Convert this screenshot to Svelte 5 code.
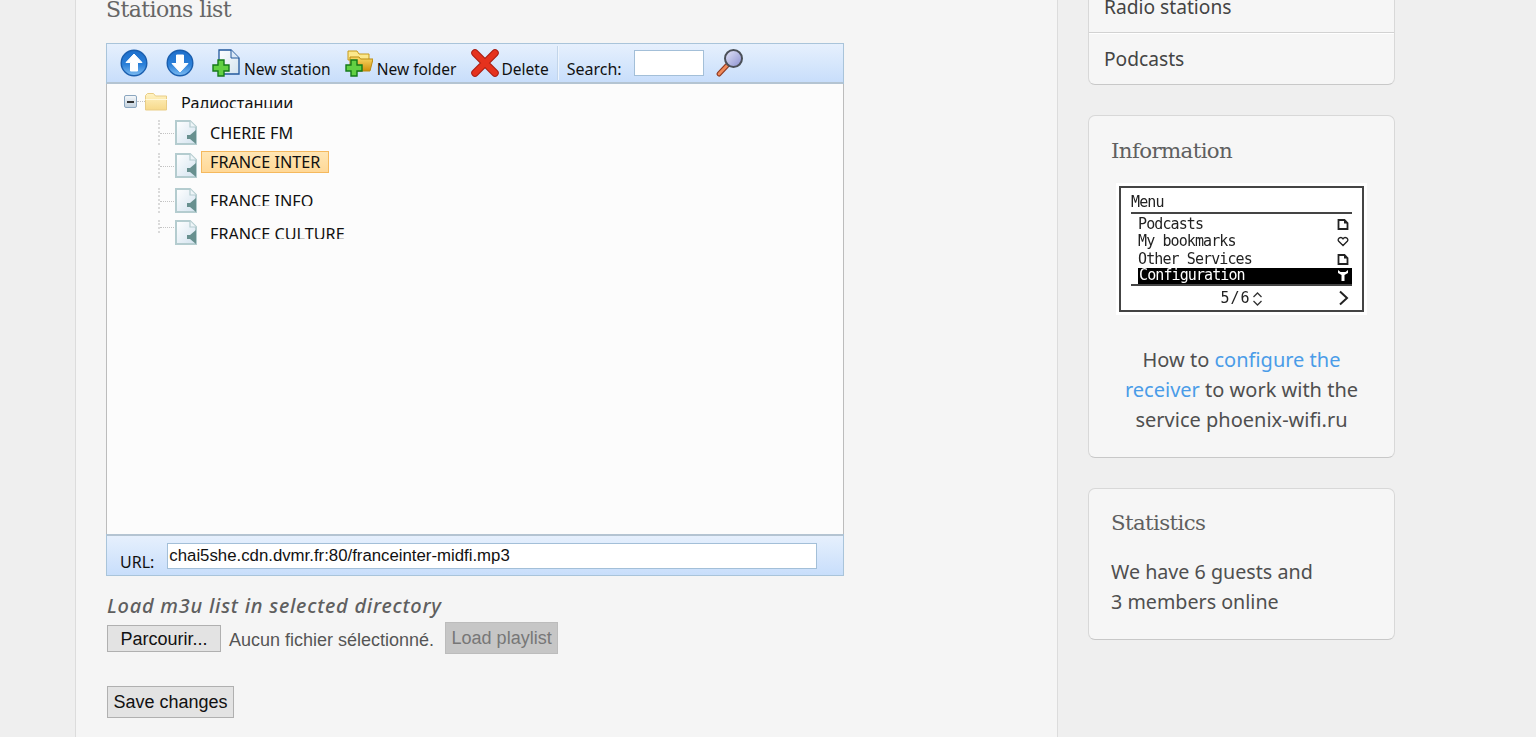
<script lang="ts">
  const stations = [
    { name: 'CHERIE FM', cls: 'r1' },
    { name: 'FRANCE INTER', cls: 'r2', selected: true },
    { name: 'FRANCE INFO', cls: 'r3' },
    { name: 'FRANCE CULTURE', cls: 'r4' }
  ];
  const lcdRows = [
    { label: 'Podcasts', icon: 'doc' },
    { label: 'My bookmarks', icon: 'heart' },
    { label: 'Other Services', icon: 'doc' },
    { label: 'Configuration', icon: 'tool', active: true }
  ];
</script>

<svg class="defs" width="0" height="0" aria-hidden="true">
  <defs>
    <linearGradient id="blueBall" x1="0" y1="0" x2="0" y2="1">
      <stop offset="0" stop-color="#1f6fcb" />
      <stop offset="0.55" stop-color="#2a7fd8" />
      <stop offset="1" stop-color="#7fbdf2" />
    </linearGradient>
    <linearGradient id="paper" x1="0" y1="0" x2="1" y2="1">
      <stop offset="0" stop-color="#ffffff" />
      <stop offset="1" stop-color="#d3e3ef" />
    </linearGradient>
    <linearGradient id="paleFolder" x1="0" y1="0" x2="0" y2="1">
      <stop offset="0" stop-color="#fff3c4" />
      <stop offset="1" stop-color="#f7d98a" />
    </linearGradient>
    <linearGradient id="goldFolder" x1="0" y1="0" x2="0" y2="1">
      <stop offset="0" stop-color="#fbdc68" />
      <stop offset="1" stop-color="#d28f0c" />
    </linearGradient>
    <linearGradient id="lens" x1="0" y1="0" x2="1" y2="1">
      <stop offset="0" stop-color="#e4e6f8" />
      <stop offset="1" stop-color="#8a8fd0" />
    </linearGradient>
  </defs>
</svg>

{#snippet plus(x: number, y: number)}
  <path d="M{x + 5} {y}h6v5h5v6h-5v5h-6v-5h-5v-6h5z" fill="#62d043" stroke="#157a1a" stroke-width="1.400" />
{/snippet}

{#snippet stationIcon()}
  <svg class="st-icon" width="24" height="25" viewBox="0 0 24 25" aria-hidden="true">
    <path d="M2 1h14l6 6v17H2z" fill="url(#paper)" stroke="#b4cccf" stroke-width="2" />
    <path d="M16 1v6h6" fill="#eef5f8" stroke="#b4cccf" stroke-width="1.200" />
    <path d="M13 15h3l6-5v14l-6-5h-3z" fill="#68908f" />
  </svg>
{/snippet}

<div class="page">
  <main class="content">
    <h2 class="title">Stations list</h2>

    <section class="tree-widget">
      <div class="toolbar">
        <button class="tool arrow" type="button" aria-label="Move up">
          <svg width="28" height="28" viewBox="0 0 28 28">
            <circle cx="14" cy="14" r="12.800" fill="url(#blueBall)" stroke="#1a5eae" stroke-width="1.400" />
            <path d="M14 5l8 8.500h-4.500V22h-7v-8.500H6z" fill="#fff" stroke="#fff" stroke-linejoin="round" />
          </svg>
        </button>
        <button class="tool arrow second" type="button" aria-label="Move down">
          <svg width="28" height="28" viewBox="0 0 28 28">
            <circle cx="14" cy="14" r="12.800" fill="url(#blueBall)" stroke="#1a5eae" stroke-width="1.400" />
            <path d="M14 23l-8-8.500h4.500V6h7v8.500H22z" fill="#fff" stroke="#fff" stroke-linejoin="round" />
          </svg>
        </button>
        <button class="tool station" type="button">
          <svg width="28" height="28" viewBox="0 0 28 28" aria-hidden="true">
            <path d="M7 1h12l8 8v16H7z" fill="url(#paper)" stroke="#23589c" stroke-width="1.300" />
            <path d="M19 1v8h8" fill="#dce9f6" stroke="#23589c" stroke-width="1" />
            {@render plus(1, 11)}
          </svg>
          <span>New station</span>
        </button>
        <button class="tool folder" type="button">
          <svg width="28" height="28" viewBox="0 0 28 28" aria-hidden="true">
            <path d="M3 10V2h9l2 3h10v6H3z" fill="#fbe88c" stroke="#c79a1a" />
            <path d="M5 22V8h9l1.500 2H28l-3 12z" fill="url(#goldFolder)" stroke="#b98a12" />
            {@render plus(1, 11)}
          </svg>
          <span>New folder</span>
        </button>
        <button class="tool delete" type="button">
          <svg width="28" height="28" viewBox="0 0 28 28" aria-hidden="true">
            <path d="M4 4l20 20M24 4L4 24" stroke="#a81c10" stroke-width="7.500" stroke-linecap="round" />
            <path d="M4 4l20 20M24 4L4 24" stroke="#e5321d" stroke-width="5.500" stroke-linecap="round" />
          </svg>
          <span>Delete</span>
        </button>
        <span class="sep"></span>
        <label class="search">
          <span>Search:</span>
          <input type="text" />
        </label>
        <button class="tool lens" type="button" aria-label="Search">
          <svg width="30" height="30" viewBox="0 0 30 30">
            <path d="M12 17.500l-8 8.500" stroke="#8f3a22" stroke-width="5" stroke-linecap="round" />
            <path d="M12 17.500l-8 8.500" stroke="#f08a5a" stroke-width="2.600" stroke-linecap="round" />
            <circle cx="18.500" cy="10.500" r="8.500" fill="url(#lens)" stroke="#4b5058" stroke-width="2" />
          </svg>
        </button>
      </div>

      <div class="tree">
        <div class="root-row">
          <span class="expander"><i></i></span>
          <span class="dots-h"></span>
          <svg class="root-folder" width="26" height="20" viewBox="0 0 26 20" aria-hidden="true">
            <path d="M1.500 18V3.500L3.500 1.500h6l2 2.500h11v14z" fill="url(#paleFolder)" stroke="#e9cd86" />
            <path d="M1.500 7.500h21.500" stroke="#fff8dc" />
          </svg>
          <span class="label root-label">Радиостанции</span>
        </div>
        {#each stations as s}
          <div class="row {s.cls}">
            <span class="branch"></span>
            {@render stationIcon()}
            <span class="label" class:selected={s.selected}><span class="clip">{s.name}</span></span>
          </div>
        {/each}
      </div>

      <div class="urlbar">
        <span>URL:</span>
        <input type="text" value="chai5she.cdn.dvmr.fr:80/franceinter-midfi.mp3" />
      </div>
    </section>

    <h3 class="load-title">Load m3u list in selected directory</h3>
    <div class="load-row">
      <button class="btn browse" type="button">Parcourir...</button>
      <span class="no-file">Aucun fichier sélectionné.</span>
      <button class="btn disabled" type="button">Load playlist</button>
    </div>
    <button class="btn save" type="button">Save changes</button>
  </main>

  <aside class="sidebar">
    <nav class="card menu">
      <a href="#radio">Radio stations</a>
      <a href="#podcasts">Podcasts</a>
    </nav>

    <section class="card info">
      <h3>Information</h3>
      <div class="lcd-wrap">
        <div class="lcd">
          <div class="lcd-head">Menu</div>
          {#each lcdRows as r}
            <div class="lcd-row" class:active={r.active}>
              <span>{r.label}</span>
              <svg width="12" height="11" viewBox="0 0 12 11" aria-hidden="true">
                {#if r.icon === 'doc'}
                  <path d="M1.500 1h6l3 3v6h-9z" fill="none" stroke="#222" stroke-width="1.800" />
                  <path d="M7 1l4 3.500H7z" fill="#222" />
                {:else if r.icon === 'heart'}
                  <path d="M6 9.500L1.500 5C0 2.500 4 0 6 2.800 8 0 12 2.500 10.500 5z" fill="none" stroke="#222" stroke-width="1.300" />
                {:else}
                  <path d="M1 0v3l3.500 2v6h3V5L11 3V0L8.500 2h-5z" fill="#fff" />
                {/if}
              </svg>
            </div>
          {/each}
          <div class="lcd-foot">
            <span>5/6</span>
            <svg class="updown" width="11" height="16" viewBox="0 0 11 16" aria-hidden="true">
              <path d="M1.500 6l4-4 4 4M1.500 10l4 4 4-4" fill="none" stroke="#333" stroke-width="1.300" />
            </svg>
            <svg class="chev" width="11" height="16" viewBox="0 0 11 16" aria-hidden="true">
              <path d="M2 1.500L9 8l-7 6.500" fill="none" stroke="#222" stroke-width="2" />
            </svg>
          </div>
        </div>
      </div>
      <p>How to <a href="#conf">configure the receiver</a> to work with the service phoenix-wifi.ru</p>
    </section>

    <section class="card stats">
      <h3>Statistics</h3>
      <p>We have 6 guests and<br />3 members online</p>
    </section>
  </aside>
</div>

<style>
  :global(body) {
    margin: 0;
    background: #efefef;
    overflow: hidden;
  }
  .defs { position: absolute; }

  .page {
    height: 737px;
    overflow: hidden;
    display: flex;
    align-items: flex-start;
    padding-left: 75px;
    font-family: "Noto Sans", sans-serif;
    color: #4a4a4a;
  }

  .content {
    box-sizing: border-box;
    width: 983px;
    height: 760px;
    margin-top: -20px;
    padding: 15px 0 0 31px;
    background: #f5f5f5;
    border-left: 1px solid #dcdcdc;
    border-right: 1px solid #dcdcdc;
  }
  .title {
    margin: 0 0 18px -1px;
    font: 400 22px/30px "DejaVu Serif", serif;
    color: #666;
    letter-spacing: -0.6px;
  }

  .tree-widget {
    box-sizing: border-box;
    width: 738px;
    margin-left: -1px;
    border: 1px solid #a9c4da;
    background: #fcfcfc;
  }
  .toolbar {
    display: flex;
    align-items: center;
    height: 38px;
    padding-left: 13px;
    background: linear-gradient(#e6f0fd, #c8defb);
    border-bottom: 2px solid #b4c4d2;
    font: 15.500px "Noto Sans", sans-serif;
    color: #111;
  }
  .tool {
    display: flex;
    align-items: flex-end;
    gap: 4px;
    padding: 0;
    border: 0;
    background: none;
    font: inherit;
    color: inherit;
    white-space: nowrap;
  }
  .tool span { line-height: 20px; margin-bottom: -2px; }
  .arrow.second { margin-left: 18px; }
  .station { margin-left: 18px; }
  .folder { margin-left: 14px; }
  .delete { margin-left: 14px; gap: 3px; }
  .sep {
    width: 1px;
    height: 34px;
    margin-left: 8px;
    background: #c2d5ea;
    box-shadow: 1px 0 #eef5fd;
  }
  .search {
    display: flex;
    align-items: center;
    gap: 12px;
    margin-left: 9px;
  }
  .search span { margin-top: 12px; font-size: 16px; }
  .search input {
    box-sizing: border-box;
    width: 70px;
    height: 26px;
    border: 1px solid #a3bfd8;
    background: #fff;
    margin-top: -1px;
  }
  .lens { margin-left: 11px; }

  .tree {
    box-sizing: border-box;
    height: 450px;
    margin: 0 -1px;
    padding: 8px 0 0 17px;
    background: #fcfcfc;
    border-left: 1px solid #bcbcbc;
    border-right: 1px solid #bcbcbc;
    font: 16.200px "Noto Sans", sans-serif;
    color: #111;
  }
  .root-row {
    display: flex;
    align-items: center;
    height: 19px;
  }
  .expander {
    box-sizing: border-box;
    display: flex;
    align-items: center;
    justify-content: center;
    width: 13px;
    height: 13px;
    border: 1px solid #8ba6bf;
    border-radius: 2px;
    background: linear-gradient(#f4f7fa, #c4d2de);
  }
  .expander i {
    width: 7px;
    height: 2px;
    background: #333;
  }
  .dots-h {
    width: 8px;
    border-top: 1px dotted #c4c4c4;
  }
  .root-folder { margin-left: -1px; }
  .root-label {
    height: 13px;
    line-height: 16px;
    margin-top: -1px;
    overflow: hidden;
    margin-left: 11px;
  }

  .row {
    position: relative;
    display: flex;
    align-items: center;
    margin-left: 34px;
    padding-left: 16px;
    height: 25px;
  }
  .r1 { margin-top: 9px; }
  .r2 { margin-top: 8px; }
  .r3 { margin-top: 10px; }
  .r4 { margin-top: 7px; }
  .branch {
    position: absolute;
    left: 0;
    top: 0;
    bottom: 0;
    width: 14px;
    border-left: 2px dotted #dadada;
  }
  .branch::after {
    content: '';
    position: absolute;
    top: 50%;
    left: 0;
    width: 14px;
    border-top: 1px dotted #c4c4c4;
  }
  .r4 .branch { bottom: 12px; }
  .st-icon { flex: none; }
  .row .label {
    margin-left: 12px;
  }
  .clip { display: block; line-height: 20px; }
  .row .label.selected {
    margin-left: 3px;
    margin-top: -7px;
    padding: 0 8px;
    border: 1px solid #f5b95e;
    background: linear-gradient(#ffe6b4, #ffd897);
  }
  .r3 .label { margin-top: -4px; }
  .r4 .label { margin-top: -2px; }
  .r3 .clip, .r4 .clip {
    height: 15px;
    overflow: hidden;
  }

  .urlbar {
    display: flex;
    align-items: center;
    gap: 13px;
    height: 39px;
    padding-left: 13px;
    border-top: 2px solid #b4c4d2;
    background: linear-gradient(#e6f0fd, #c8defb);
    font: 16px "Noto Sans", sans-serif;
    color: #111;
  }
  .urlbar span { margin-top: 13px; }
  .urlbar input {
    box-sizing: border-box;
    width: 650px;
    height: 26px;
    padding: 0 1px;
    margin-top: 0;
    border: 1px solid #a3bfd8;
    background: #fff;
    font: 16.800px "Liberation Sans", sans-serif;
    color: #111;
  }

  .load-title {
    margin: 17px 0 0;
    font: italic 500 20px/26px "Noto Sans", sans-serif;
    letter-spacing: 0.75px;
    color: #5f5f5f;
  }
  .load-row {
    display: flex;
    align-items: flex-start;
    margin-top: 3px;
    font: 18px "Liberation Sans", sans-serif;
  }
  .btn {
    box-sizing: border-box;
    border: 1px solid #b0b0b0;
    background: #e3e3e3;
    color: #111;
    font: 18px "Liberation Sans", sans-serif;
    padding: 0;
  }
  .browse { width: 114px; height: 27px; margin-top: 3px; padding-top: 2px; }
  .no-file { margin: 8px 0 0 8px; color: #555; }
  .disabled {
    width: 113px;
    height: 32px;
    margin-left: 11px;
    background: #c6c6c6;
    border-color: #bcbcbc;
    color: #777;
  }
  .save {
    display: block;
    width: 127px;
    height: 32px;
    margin-top: 32px;
  }

  .sidebar {
    width: 307px;
    margin-left: 30px;
    margin-top: -20px;
    display: flex;
    flex-direction: column;
    gap: 30px;
  }
  .card {
    box-sizing: border-box;
    background: #f6f6f6;
    border: 1px solid #d8d8d8;
    border-bottom-color: #c8c8c8;
    border-radius: 7px;
  }
  .menu { height: 105px; display: flex; flex-direction: column; }
  .menu a {
    display: block;
    box-sizing: border-box;
    flex: 1;
    padding: 13px 15px 0;
    color: #444;
    text-decoration: none;
    font-size: 19.200px;
    line-height: 26px;
  }
  .menu a + a {
    flex: none;
    height: 52px;
    padding-top: 13px;
    border-top: 1px solid #d2d2d2;
    box-shadow: inset 0 1px #fff;
  }
  .card h3 {
    margin: 0;
    font: 400 21.300px/30px "DejaVu Serif", serif;
    letter-spacing: -0.6px;
    color: #5f5f5f;
  }
  .info { height: 343px; padding: 20px 22px 0; }
  .lcd-wrap {
    display: flex;
    justify-content: center;
    margin-top: 20px;
  }
  .lcd {
    box-sizing: border-box;
    flex: none;
    width: 245px;
    height: 126px;
    padding: 6px 10px 0;
    border: 2px solid #444;
    outline: 3px solid #fff;
    background: #fff;
    font: 15px/17px "DejaVu Sans Mono", monospace;
    letter-spacing: -0.9px;
    color: #222;
    filter: blur(0.4px);
  }
  .lcd-head {
    height: 18px;
    border-bottom: 2px solid #444;
    margin-bottom: 2px;
  }
  .lcd-row {
    display: flex;
    justify-content: space-between;
    align-items: center;
    padding: 0 3px 0 7px;
    height: 17.300px;
  }
  .lcd-row.active {
    margin-left: 7px;
    padding-left: 1px;
    background: #000;
    color: #fff;
    border-bottom: 2px solid #fff;
    box-sizing: border-box;
    height: 18px;
  }
  .lcd-foot {
    position: relative;
    display: flex;
    justify-content: center;
    align-items: center;
    gap: 1px;
    height: 26px;
    margin-top: -2px;
    border-top: 2px solid #444;
    letter-spacing: 1px;
  }
  .chev { position: absolute; right: 3px; top: 4px; }
  .info p, .stats p {
    font-size: 19.700px;
    line-height: 30px;
    color: #4f4f4f;
    margin: 0;
  }
  .info p {
    margin-top: 33px;
    font-size: 20px;
    text-align: center;
  }
  .info p a { color: #4a9ce8; text-decoration: none; }
  .stats { height: 152px; padding: 19px 22px 0; }
  .stats p { margin-top: 19px; }
</style>
